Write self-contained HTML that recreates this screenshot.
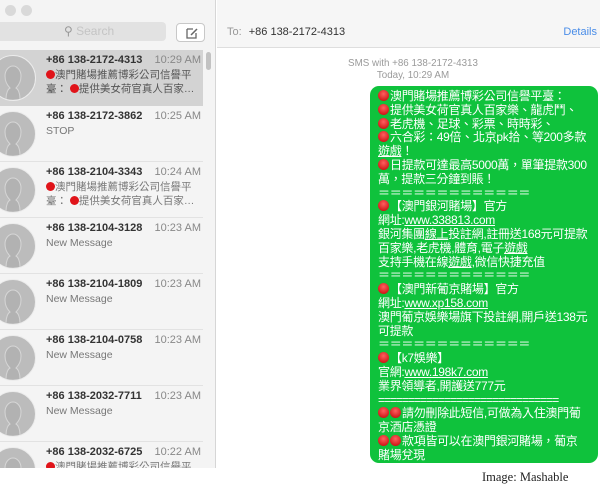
<!DOCTYPE html>
<html><head><meta charset="utf-8"><style>
*{margin:0;padding:0;box-sizing:border-box}
body{width:600px;height:490px;background:#fff;font-family:"Liberation Sans","Noto Sans CJK TC",sans-serif;position:relative;overflow:hidden}
#side{position:absolute;left:0;top:0;width:216px;height:468px;background:#f4f4f4;border-right:1px solid #d6d6d6}
.dot{position:absolute;top:5px;width:11px;height:11px;border-radius:50%;background:#d9d9d9}
#search{position:absolute;left:0;top:22px;width:166px;height:19px;background:#e2e2e2;border-radius:0 4px 4px 0;color:#c4c4c4;font-size:12px;line-height:19px;padding-left:64px}
#compose{position:absolute;left:176px;top:23px;width:29px;height:19px;border:1px solid #c8c8c8;border-radius:4px;background:#fff}
.row{position:absolute;left:0;width:203px;height:56px;border-bottom:1px solid #e2e2e2}
.row.sel{background:#d3d3d3;border-bottom:none}
.av{position:absolute;left:-10px;top:5px;width:46px;height:46px}
.ph{position:absolute;left:46px;top:4px;font-size:11px;font-weight:bold;color:#333}
.tm{position:absolute;right:2px;top:4px;font-size:11px;color:#888}
.pv{position:absolute;left:46px;top:18px;width:154px;font-size:10.5px;line-height:14px;color:#777}
.r{display:inline-block;width:9px;height:9px;border-radius:50%;background:#e0141a;vertical-align:-1px}
#scroll{position:absolute;left:206px;top:52px;width:5px;height:18px;border-radius:3px;background:#c2c2c2}
#hdr{position:absolute;left:217px;top:0;width:383px;height:48px;background:#f6f6f6;border-bottom:1px solid #dedede}
#to{position:absolute;left:10px;top:26px;font-size:11px;color:#999}
#to b{color:#333;font-weight:normal;margin-left:4px}
#det{position:absolute;right:3px;top:26px;font-size:11px;color:#4a8de8}
#sms{position:absolute;left:318px;top:58px;width:190px;text-align:center;font-size:9.8px;color:#9a9a9a;line-height:12px}
#bub{position:absolute;left:370px;top:86px;width:228px;height:377px;background:#0fc23c;border-radius:9px;color:#fff;font-size:12px;line-height:13.8px;padding:4px 2px 0 8px;letter-spacing:-.3px;white-space:nowrap}
#bub .r{width:11px;height:11px;margin-right:1px;background:radial-gradient(circle at 50% 35%,#ff6060,#c00000);vertical-align:-1px}
#bub u{text-decoration:underline}
#cap{position:absolute;left:482px;top:470px;font-family:"Liberation Serif",serif;font-size:12.5px;color:#222}
</style></head><body>
<svg width="0" height="0" style="position:absolute"><defs><g id="a"><circle cx="23" cy="23" r="22.5" fill="#bcbcbc" stroke="#ececec" stroke-width="1"/><path d="M16 44c0-6 2-10 4-11-3-3-5-7-5-12 0-6 4-10 8-10s8 4 8 10c0 5-2 9-5 12 2 1 4 5 4 11" fill="#b2b2b2" stroke="#d6d6d6" stroke-width="1"/></g></defs></svg>
<div id="side">
<div class="dot" style="left:5px"></div><div class="dot" style="left:21px"></div>
<div id="search"><span style="color:#999">&#9906;</span> Search</div>
<div id="compose"><svg width="29" height="19" viewBox="0 0 29 19"><path d="M10 5h6M10 5v9h9v-5" stroke="#666" fill="none" stroke-width="1.3"/><path d="M14 11l6-6" stroke="#666" stroke-width="1.5"/></svg></div>
<div class="row sel" style="top:50px"><svg class="av"><use href="#a"/></svg><div class="ph">+86 138-2172-4313</div><div class="tm">10:29 AM</div><div class="pv" style="color:#555"><span class="r"></span>澳門賭場推薦博彩公司信譽平臺： <span class="r"></span>提供美女荷官真人百家…</div></div>
<div class="row" style="top:106px"><svg class="av"><use href="#a"/></svg><div class="ph">+86 138-2172-3862</div><div class="tm">10:25 AM</div><div class="pv">STOP</div></div>
<div class="row" style="top:162px"><svg class="av"><use href="#a"/></svg><div class="ph">+86 138-2104-3343</div><div class="tm">10:24 AM</div><div class="pv"><span class="r"></span>澳門賭場推薦博彩公司信譽平臺： <span class="r"></span>提供美女荷官真人百家…</div></div>
<div class="row" style="top:218px"><svg class="av"><use href="#a"/></svg><div class="ph">+86 138-2104-3128</div><div class="tm">10:23 AM</div><div class="pv">New Message</div></div>
<div class="row" style="top:274px"><svg class="av"><use href="#a"/></svg><div class="ph">+86 138-2104-1809</div><div class="tm">10:23 AM</div><div class="pv">New Message</div></div>
<div class="row" style="top:330px"><svg class="av"><use href="#a"/></svg><div class="ph">+86 138-2104-0758</div><div class="tm">10:23 AM</div><div class="pv">New Message</div></div>
<div class="row" style="top:386px"><svg class="av"><use href="#a"/></svg><div class="ph">+86 138-2032-7711</div><div class="tm">10:23 AM</div><div class="pv">New Message</div></div>
<div class="row" style="top:442px;height:26px;overflow:hidden;border:none"><svg class="av"><use href="#a"/></svg><div class="ph">+86 138-2032-6725</div><div class="tm">10:22 AM</div><div class="pv"><span class="r"></span>澳門賭場推薦博彩公司信譽平</div></div>
<div id="scroll"></div>
</div>
<div id="hdr"><div id="to">To: <b>+86 138-2172-4313</b></div><div id="det">Details</div></div>
<div id="sms">SMS with +86 138-2172-4313<br>Today, 10:29 AM</div>
<div id="bub">
<span class="r"></span>澳門賭場推薦博彩公司信譽平臺：<br>
<span class="r"></span>提供美女荷官真人百家樂、龍虎鬥、<br>
<span class="r"></span>老虎機、足球、彩票、時時彩、<br>
<span class="r"></span>六合彩：49倍、北京pk拾、等200多款<br>
<u>遊戲</u>！<br>
<span class="r"></span>日提款可達最高5000萬，單筆提款300<br>
萬，提款三分鐘到賬！<br>
＝＝＝＝＝＝＝＝＝＝＝＝＝<br>
<span class="r"></span>【澳門銀河賭場】官方<br>
網址:<u>www.338813.com</u><br>
銀河集團<u>線上</u>投註網,註冊送168元可提款<br>
百家樂,老虎機,體育,電子<u>遊戲</u><br>
支持手機在線<u>遊戲</u>,微信快捷充值<br>
＝＝＝＝＝＝＝＝＝＝＝＝＝<br>
<span class="r"></span>【澳門新葡京賭場】官方<br>
網址:<u>www.xp158.com</u><br>
澳門葡京娛樂場旗下投註網,開戶送138元<br>
可提款<br>
＝＝＝＝＝＝＝＝＝＝＝＝＝<br>
<span class="r"></span>【k7娛樂】<br>
官網:<u>www.198k7.com</u><br>
業界領導者,開護送777元<br>
<span style="letter-spacing:-1px">==============================</span><br>
<span class="r"></span><span class="r"></span>請勿刪除此短信,可做為入住澳門葡<br>
京酒店憑證<br>
<span class="r"></span><span class="r"></span>款項皆可以在澳門銀河賭場，葡京<br>
賭場兌現
</div>
<div id="cap">Image: Mashable</div>
</body></html>
